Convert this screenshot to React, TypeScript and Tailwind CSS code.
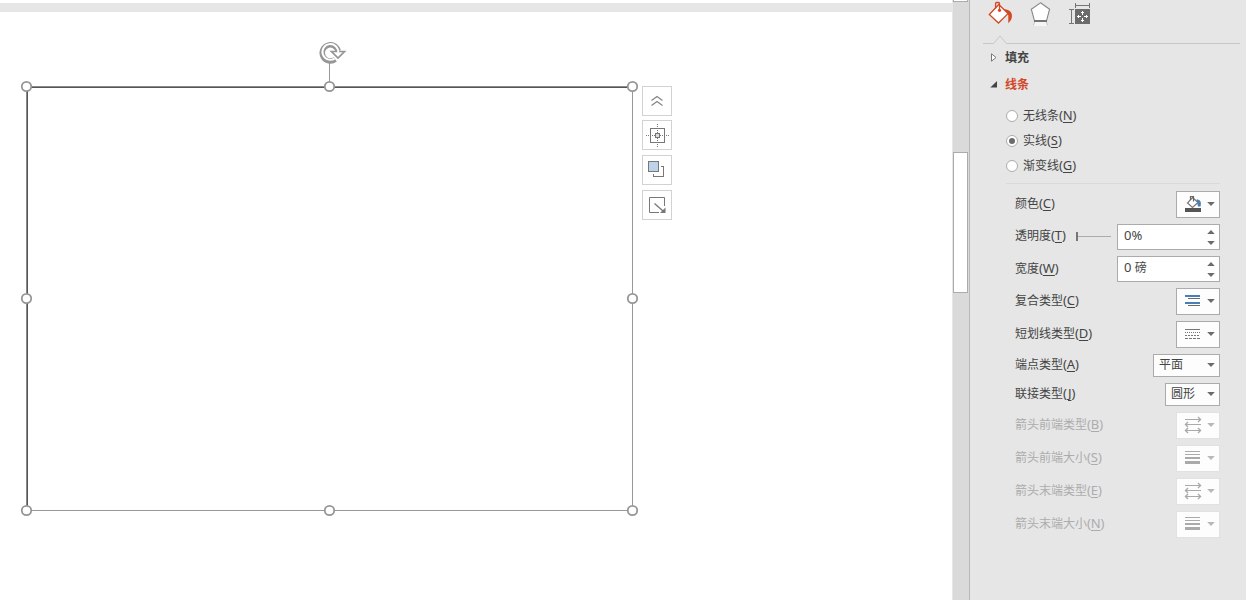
import type { ReactNode } from 'react';

function Caret({ muted = false }: { muted?: boolean }) {
  return (
    <svg width="8" height="4" viewBox="0 0 8 4" className="shrink-0">
      <path d="M0.2 0H7.8L4 4Z" fill={muted ? '#b8b8b8' : '#6b6b6b'} />
    </svg>
  );
}

function Latin({ children }: { children: ReactNode }) {
  return <span className="pb-0.5 text-[13px]">{children}</span>;
}

function Label({ text, hot }: { text: string; hot: string }) {
  return (
    <span className="flex h-[18px] items-center whitespace-nowrap leading-[18px]">
      <span>{text}</span>
      <span className="pb-0.5 text-[13px] tracking-[-0.1px]">
        (<span className="underline decoration-1 underline-offset-2">{hot}</span>)
      </span>
    </span>
  );
}

function Row({ text, hot, size, muted, labelTop = 'pt-1', children }: { text: string; hot: string; size: string; muted?: boolean; labelTop?: string; children: ReactNode }) {
  return (
    <div className={`flex items-start justify-between pl-[45px] pr-[26px] ${size} ${muted ? 'text-[#acacac]' : 'text-[#444444]'}`}>
      <div className={labelTop}>
        <Label text={text} hot={hot} />
      </div>
      {children}
    </div>
  );
}

function IconButton({ muted, children }: { muted?: boolean; children: ReactNode }) {
  return (
    <button className={`flex h-[27px] w-11 items-center border bg-[#fdfdfd] pl-[7px] pr-1 ${muted ? 'border-[#e1e1e1]' : 'border-[#ababab]'}`}>
      <span className="pb-0.5">{children}</span>
      <span className="ml-auto flex pb-px">
        <Caret muted={muted} />
      </span>
    </button>
  );
}

function Spinner({ children }: { children: ReactNode }) {
  return (
    <div className="flex h-[26px] w-[103px] items-center justify-between border border-[#ababab] bg-white pl-1.5 pr-1">
      <span className="flex items-center pb-[2px] leading-[18px]">{children}</span>
      <svg width="8" height="16" viewBox="0 0 8 16" className="mt-px" fill="#6b6b6b">
        <path d="M0.2 4H7.8L4 0ZM0.2 11H7.8L4 15Z" />
      </svg>
    </div>
  );
}

function Radio({ text, hot, on }: { text: string; hot: string; on?: boolean }) {
  return (
    <div className="flex h-[25px] items-center gap-[5px] pl-9 text-[#444444]">
      <svg width="12" height="12" viewBox="0 0 12 12">
        <circle cx="6" cy="6" r="5.5" fill="#fff" stroke="#ababab" />
        {on && <circle cx="6" cy="6" r="3" fill="#6b6b6b" />}
      </svg>
      <Label text={text} hot={hot} />
    </div>
  );
}

function LinesIcon() {
  return (
    <svg width="19" height="14" viewBox="0 0 19 14" className="block" shapeRendering="crispEdges">
      <path d="M1 2H16M1 9H16" stroke="#4a7fb5" strokeWidth="2" />
      <path d="M4 4.5H16M4 11.5H16" stroke="#6b6b6b" />
    </svg>
  );
}

function DashIcon() {
  return (
    <svg width="19" height="14" viewBox="0 0 19 14" className="block" stroke="#777" shapeRendering="crispEdges">
      <path d="M1 2.5H16" />
      <path d="M1 5.5H16" strokeDasharray="1 1" />
      <path d="M1 8.5H16" strokeDasharray="2 1" />
      <path d="M1 11.5H16" strokeDasharray="3 1" />
    </svg>
  );
}

function ArrowsIcon() {
  return (
    <svg width="19" height="18" viewBox="0 0 19 18" className="block" stroke="#aaa" fill="none">
      <path d="M1 3.5H16.5M1.5 8.5H17M1.5 14.5H16.5" />
      <path d="M14 1L16.5 3.5L14 6M4 6L1.5 8.5L4 11M4 12L1.5 14.5L4 17M14 12L16.5 14.5L14 17" strokeWidth="1.4" />
    </svg>
  );
}

function WeightsIcon() {
  return (
    <svg width="19" height="15" viewBox="0 0 19 15" className="block" fill="#aaa" shapeRendering="crispEdges">
      <path d="M1 1h15v1H1zM1 4h15v1H1zM1 7h15v2H1zM1 11h15v3H1z" />
    </svg>
  );
}

function ColorIcon() {
  return (
    <svg width="19" height="18" viewBox="0 0 19 18" className="block" fill="none">
      <path d="M12.5 4.5C16.5 4.5 17.5 7 16.5 11.5H14Z" fill="#4080bd" />
      <path d="M8.5 2.5L14 7.5L8.5 12.5L3.5 8Z" fill="#fff" stroke="#777" strokeWidth="1.2" />
      <path d="M6.5 5V1.5H9.5V6.5" stroke="#666" strokeWidth="1.2" />
      <path d="M1 13h16v4H1z" fill="#555" />
    </svg>
  );
}

function PanelTabs() {
  return (
    <div className="h-11">
      <svg width="276" height="44" viewBox="970 0 276 44" fill="none">
        <path d="M1002.5 9C1010 9 1012.8 13 1011.8 17.5C1011.2 20.5 1009.8 21.5 1008.3 23.2V15Z" fill="#d24726" />
        <path d="M998.8 4.5L1008 13.6L998.5 23L989.3 14.5Z" fill="#fff" stroke="#d24726" strokeWidth="1.3" />
        <path d="M995.6 8.5V3.5Q995.6 2.5 996.6 2.5H998.5Q999.5 2.5 999.5 3.5V10.5" stroke="#d24726" strokeWidth="1.3" />
        <circle cx="999.5" cy="10.3" r="1.6" fill="#d24726" />
        <path d="M1034.5 22H1046.5L1048 26H1033Z" fill="#f5f5f5" />
        <path d="M1034.5 22L1033.4 25.5M1046.5 22L1047.6 25.5" stroke="#c4c4c4" />
        <path d="M1040.5 2.8L1049.6 9.2L1046.5 20.8H1034.5L1031.3 9.2Z" fill="#fff" stroke="#868686" strokeWidth="1.1" />
        <path d="M1034 21H1047" stroke="#747474" strokeWidth="2" />
        <path d="M1075 9h15v15h-15z" fill="#6b6b6b" />
        <path d="M1075.5 3V8M1089.5 3V8M1075 5.5H1090M1069 9.5H1074M1069 23.5H1074M1071.5 10V23" stroke="#747474" />
        <path d="M1082.5 11V15M1082.5 18V22M1077 16.5H1081M1084 16.5H1088" stroke="#fff" />
        <path d="M1081 12.5h3M1081 20.5h3M1078.5 15v3M1086.5 15v3" stroke="#fff" />
        <path d="M983 43.5H993.5L1000 36L1006.5 43.5H1240" stroke="#c6c6c6" />
      </svg>
    </div>
  );
}

function FormatPanel() {
  return (
    <aside className="flex w-[277px] shrink-0 flex-col border-l border-[#b8b8b8] bg-[#e6e6e6]">
      <PanelTabs />
      <div className="flex h-[27px] items-center gap-2 pl-[21px] font-bold text-[#444444]">
        <svg width="6" height="9" viewBox="0 0 6 9"><path d="M.5 .8V8.2L5 4.5Z" fill="#fff" stroke="#777" /></svg>
        <span>填充</span>
      </div>
      <div className="flex h-[27px] items-center gap-2 pl-5 font-bold text-[#d24726]">
        <svg width="7" height="7" viewBox="0 0 7 7" className="mb-px"><path d="M7 0V6.5H.3Z" fill="#444" /></svg>
        <span>线条</span>
      </div>
      <div className="pt-[5px]">
        <Radio text="无线条" hot="N" />
        <Radio text="实线" hot="S" on />
        <Radio text="渐变线" hot="G" />
      </div>
      <div className="ml-9 mr-[26px] mt-[5px] h-px shrink-0 bg-[#dadada]" />
      <div className="pt-[7px]">
        <Row text="颜色" hot="C" size="h-[33px]">
          <IconButton><ColorIcon /></IconButton>
        </Row>
        <Row text="透明度" hot="T" size="h-8" labelTop="pt-[3px]">
          <div className="flex items-center gap-1.5">
            <svg width="35" height="9" viewBox="0 0 35 9" className="mb-px" shapeRendering="crispEdges">
              <path d="M2 4.5H35" stroke="#ababab" />
              <path d="M0 0h2v9H0z" fill="#777" />
            </svg>
            <Spinner><Latin>0%</Latin></Spinner>
          </div>
        </Row>
        <Row text="宽度" hot="W" size="h-8">
          <Spinner><Latin>0&nbsp;</Latin>磅</Spinner>
        </Row>
        <Row text="复合类型" hot="C" size="h-[33px]">
          <IconButton><LinesIcon /></IconButton>
        </Row>
        <Row text="短划线类型" hot="D" size="h-[33px]">
          <IconButton><DashIcon /></IconButton>
        </Row>
        <Row text="端点类型" hot="A" size="h-[29px]" labelTop="pt-0.5">
          <button className="flex h-[23px] w-[67px] items-center justify-between border border-[#ababab] bg-[#fdfdfd] pb-[2px] pl-[5px] pr-1">
            平面<Caret />
          </button>
        </Row>
        <Row text="联接类型" hot="J" size="h-[29px]" labelTop="pt-0.5">
          <button className="flex h-[23px] w-[55px] items-center justify-between border border-[#ababab] bg-[#fdfdfd] pb-[2px] pl-[5px] pr-1">
            圆形<Caret />
          </button>
        </Row>
        <Row text="箭头前端类型" hot="B" size="h-[33px]" muted>
          <IconButton muted><ArrowsIcon /></IconButton>
        </Row>
        <Row text="箭头前端大小" hot="S" size="h-[33px]" muted>
          <IconButton muted><WeightsIcon /></IconButton>
        </Row>
        <Row text="箭头末端类型" hot="E" size="h-[33px]" muted>
          <IconButton muted><ArrowsIcon /></IconButton>
        </Row>
        <Row text="箭头末端大小" hot="N" size="h-[33px]" muted>
          <IconButton muted><WeightsIcon /></IconButton>
        </Row>
      </div>
    </aside>
  );
}

const handles = [[26.5, 86.5], [329.5, 86.5], [632.5, 86.5], [26.5, 298.5], [632.5, 298.5], [26.5, 510.5], [329.5, 510.5], [632.5, 510.5]];

function SelectedShape() {
  return (
    <svg className="absolute left-0 top-0" width="640" height="520" viewBox="0 0 640 520" fill="none">
      <g shapeRendering="crispEdges">
        <path d="M26 86.5H633M26.5 86V511" stroke="#8a8a8a" />
        <path d="M27 87.5H632M27.5 87V510" stroke="#555" />
        <path d="M632.5 87V511M27 510.5H633" stroke="#989898" />
        <path d="M329.5 62V82" stroke="#989898" />
      </g>
      <path d="M335.2 59.4A8.1 8.1 0 1 1 338.2 51" stroke="#969696" strokeWidth="5.4" />
      <path d="M331.5 51.5H344.5L338 58Z" fill="#fff" stroke="#969696" strokeWidth="1.7" />
      <path d="M334.6 58.6A7.9 7.9 0 1 1 338.2 52.6" stroke="#fff" strokeWidth="1.9" />
      {handles.map(([x, y]) => (
        <circle key={`${x}-${y}`} cx={x} cy={y} r="4.7" fill="#fff" stroke="#969696" strokeWidth="1.8" />
      ))}
    </svg>
  );
}

function QuickTools() {
  const box = 'flex size-[30px] items-center justify-center border border-[#d2d2d2] bg-white';
  return (
    <div className="absolute left-[642px] top-[86px] flex flex-col gap-[5px]">
      <button className={`${box} -mb-px`}>
        <svg width="28" height="28" viewBox="0 0 28 28" fill="none" stroke="#858585" strokeWidth="1.2">
          <path d="M8.5 13.5L14 9.5L19.5 13.5M8.5 18.5L14 14.5L19.5 18.5" />
        </svg>
      </button>
      <button className={box}>
        <svg width="28" height="28" viewBox="0 0 28 28" fill="none" stroke="#777" shapeRendering="crispEdges">
          <rect x="7.5" y="7.5" width="14" height="14" />
          <rect x="12.5" y="12.5" width="4" height="4" fill="#ddd" />
          <path d="M14.5 3V12M14.5 17V27M3 14.5H12M17 14.5H27" strokeDasharray="1 1" />
        </svg>
      </button>
      <button className={box}>
        <svg width="28" height="28" viewBox="0 0 28 28" fill="none" stroke="#777" shapeRendering="crispEdges">
          <rect x="5.5" y="5.5" width="10" height="10" fill="#bdd3ea" />
          <path d="M18 10.5H20.5V20.5H10.5V18" />
        </svg>
      </button>
      <button className={box}>
        <svg width="28" height="28" viewBox="0 0 28 28" fill="none" stroke="#777">
          <path d="M21.5 15V6.5H6.5V21.5H16" />
          <path d="M11.5 12.5L20 20" strokeWidth="1.3" />
          <path d="M22.5 16.5V22H17Z" fill="#777" stroke="none" />
        </svg>
      </button>
    </div>
  );
}

export default function App() {
  return (
    <main className="flex h-[600px] w-[1246px] overflow-hidden bg-white font-['Noto_Sans','Noto_Sans_CJK_SC',sans-serif] text-xs">
      <section className="relative w-[952px] shrink-0 bg-white pt-[3px]">
        <div className="h-[9px] bg-[#e6e6e6]" />
        <SelectedShape />
        <QuickTools />
      </section>
      <div className="flex w-[17px] shrink-0 flex-col border-l border-[#e6e6e6] bg-[#dadada] pr-px">
        <div className="h-0.5 border-x border-b border-[#ababab] bg-white" />
        <div className="mt-[150px] h-[141px] border border-[#ababab] bg-white" />
      </div>
      <FormatPanel />
    </main>
  );
}
